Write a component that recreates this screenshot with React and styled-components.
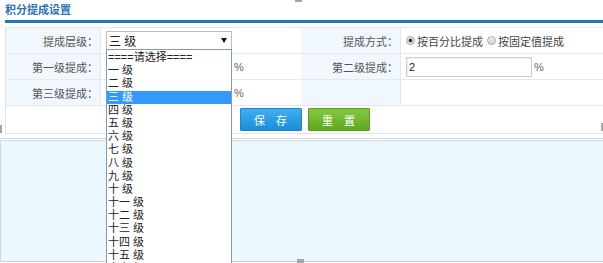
import React from 'react'
import styled, { createGlobalStyle } from 'styled-components'

const GlobalStyle = createGlobalStyle`
  html, body {
    margin: 0;
    padding: 0;
    height: 263px;
    overflow: hidden;
    background: #fff;
  }
  body {
    font-family: "Liberation Sans", "Noto Sans CJK SC", sans-serif;
    font-size: 11px;
    color: #333;
  }
`

const Page = styled.div`
  position: relative;
  height: 263px;
  display: flex;
  flex-direction: column;
  overflow: hidden;
`

const TopPanel = styled.div`
  padding: 0 0 4px 5px;
  background: #fff;
  border-bottom: 1px solid #d3dae2;
`

const Title = styled.div`
  height: 20px;
  line-height: 21px;
  font-weight: bold;
  font-size: 11px;
  color: #2f72b5;
`

const TitleBar = styled.div`
  height: 3px;
  background: #1d77bd;
  margin-bottom: 4px;
`

const FormGrid = styled.div`
  display: grid;
  grid-template-columns: 95px 200px 100px 1fr;
  grid-auto-rows: 26px;
  border-top: 1px solid #e8e8e8;
  border-left: 1px solid #e2e2e2;
`

const Label = styled.div`
  background: #f0f7fe;
  border-right: 1px solid #e3e8ee;
  border-bottom: 1px solid #e8e8e8;
  display: flex;
  align-items: center;
  justify-content: flex-end;
  padding-right: 2px;
  color: #555;
  white-space: nowrap;
`

const Value = styled.div`
  position: relative;
  border-bottom: 1px solid #e8e8e8;
  display: flex;
  align-items: center;
  padding-left: 5px;
  gap: 2px;
  white-space: nowrap;
  color: #555;
`

const TextInput = styled.div`
  box-sizing: border-box;
  width: 126px;
  height: 20px;
  border: 1px solid #cfcfcf;
  box-shadow: inset 1px 1px 1px #eee;
  padding-left: 2px;
  line-height: 18px;
  color: #222;
  background: #fff;
`

const Percent = styled.span`
  color: #666;
`

const SelectWrap = styled.div`
  position: relative;
  width: 126px;
`

const SelectBox = styled.div`
  box-sizing: border-box;
  height: 19px;
  border: 1px solid #b5bcc6;
  border-bottom-color: #7f9db9;
  display: flex;
  align-items: center;
  justify-content: space-between;
  padding: 0 4px 0 2px;
  color: #222;
  font-size: 12px;
  background: #fff;
`

const Arrow = styled.span`
  width: 0;
  height: 0;
  border-left: 3px solid transparent;
  border-right: 3px solid transparent;
  border-top: 5px solid #111;
`

const DropList = styled.div`
  position: absolute;
  z-index: 5;
  left: 0;
  top: 18px;
  width: 126px;
  box-sizing: border-box;
  border: 1px solid #7f9db9;
  background: #fff;
  padding-top: 1px;
`

const Option = styled.div`
  height: 13.2px;
  line-height: 13.2px;
  padding-left: 1px;
  font-size: 11px;
  overflow: hidden;
  color: ${p => (p.$active ? '#fff' : '#222')};
  background: ${p => (p.$active ? '#3399ff' : 'transparent')};
  white-space: nowrap;
`

const RadioGroup = styled.div`
  display: flex;
  align-items: center;
  gap: 2px;
  color: #444;
`

const RadioDot = styled.span`
  box-sizing: border-box;
  width: 9px;
  height: 9px;
  border-radius: 50%;
  border: 1px solid #a9a9a9;
  background: ${p =>
    p.$checked
      ? 'radial-gradient(circle, #333 0 1.6px, #e2e2e2 2.2px)'
      : 'linear-gradient(#f2f2f2, #cfcfcf)'};
  margin-left: ${p => (p.$first ? '0' : '2px')};
`

const ButtonRow = styled.div`
  height: 27px;
  border-left: 1px solid #e2e2e2;
  border-bottom: 1px solid #e4e4e4;
  display: flex;
  align-items: center;
  justify-content: center;
  gap: 6px;
`

const Button = styled.div`
  box-sizing: border-box;
  width: 62px;
  height: 23px;
  display: flex;
  align-items: center;
  justify-content: center;
  color: #fff;
  font-size: 11px;
  border: 1px solid ${p => (p.$green ? '#5b9d2b' : '#1c86cb')};
  background: ${p =>
    p.$green
      ? 'linear-gradient(#86c940, #5ea822)'
      : 'linear-gradient(#41aef0, #1a8dd6)'};
  border-radius: 1px;
`

const LowerPanel = styled.div`
  flex: 1;
  margin-top: 1px;
  border-top: 1px solid #d7dde4;
  border-bottom: 1px solid #c9d0d8;
  border-left: 1px solid #cfd6de;
  background: #edf7fe;
  margin-bottom: 1px;
`

const Handle = styled.div`
  position: absolute;
  background: #a6a6a6;
  ${p => p.$pos}
`

const levels = ['一', '二', '三', '四', '五', '六', '七', '八', '九', '十', '十一', '十二', '十三', '十四', '十五', '十六']

export default function App() {
  return (
    <Page>
      <GlobalStyle />
      <TopPanel>
        <Title>积分提成设置</Title>
        <TitleBar />
        <FormGrid>
          <Label>提成层级：</Label>
          <Value>
            <SelectWrap>
              <SelectBox>
                <span>三 级</span>
                <Arrow />
              </SelectBox>
              <DropList>
                <Option>====请选择====</Option>
                {levels.map(l => (
                  <Option key={l} $active={l === '三'}>
                    {l} 级
                  </Option>
                ))}
              </DropList>
            </SelectWrap>
          </Value>
          <Label>提成方式：</Label>
          <Value>
            <RadioGroup>
              <RadioDot $checked $first />
              <span>按百分比提成</span>
              <RadioDot />
              <span>按固定值提成</span>
            </RadioGroup>
          </Value>

          <Label>第一级提成：</Label>
          <Value>
            <TextInput />
            <Percent>%</Percent>
          </Value>
          <Label>第二级提成：</Label>
          <Value>
            <TextInput>2</TextInput>
            <Percent>%</Percent>
          </Value>

          <Label>第三级提成：</Label>
          <Value>
            <TextInput />
            <Percent>%</Percent>
          </Value>
          <Label />
          <Value />
        </FormGrid>
        <ButtonRow>
          <Button>保　存</Button>
          <Button $green>重　置</Button>
        </ButtonRow>
      </TopPanel>
      <LowerPanel />
      <Handle $pos="left: 295px; top: 0; width: 7px; height: 2px;" />
      <Handle $pos="left: 297px; bottom: 0; width: 7px; height: 4px;" />
      <Handle $pos="left: 0; top: 125px; width: 2px; height: 8px;" />
      <Handle $pos="right: 0; top: 123px; width: 2px; height: 8px;" />
    </Page>
  )
}
